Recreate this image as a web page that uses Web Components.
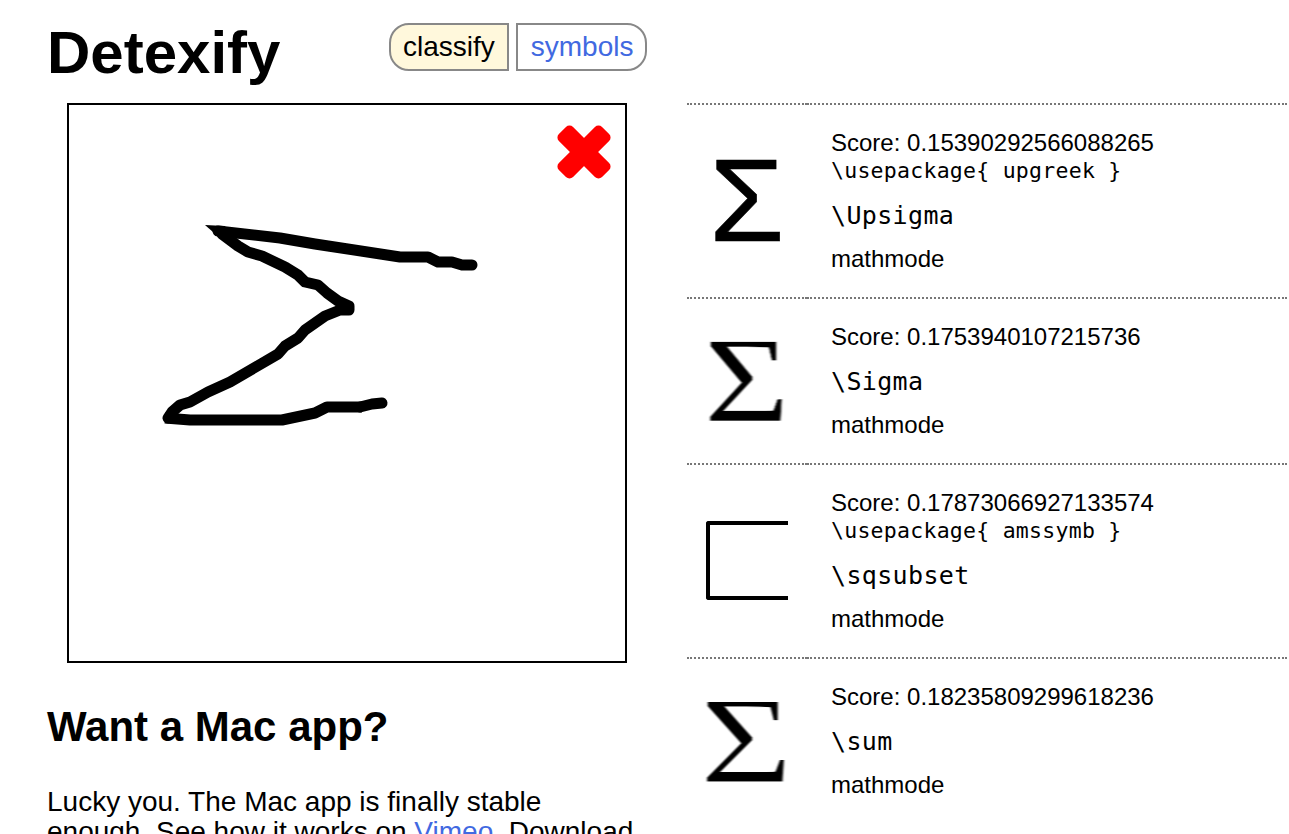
<!DOCTYPE html>
<html>

<head>
    <meta charset="utf-8">
    <meta name="viewport" content="width=device-width, initial-scale=1.0">
    <title>Detexify</title>
    <style>
        html, body {
            margin: 0;
            height: 100%;
            overflow: hidden;
            background: #fff;
        }

        body {
            font-family: "Liberation Sans", Arial, sans-serif;
            font-size: 24px;
            color: #000;
        }
    </style>
</head>

<body>
    <detexify-app>
        <detexify-header slot="header"></detexify-header>
        <draw-canvas slot="left"></draw-canvas>
        <mac-note slot="left">
            Lucky you. The Mac app is finally stable enough. See how it works on <a href="#">Vimeo</a>. Download
        </mac-note>

        <symbol-row slot="right" score="0.15390292566088265" package="upgreek" command="\Upsigma" kind="upsigma"></symbol-row>
        <symbol-row slot="right" score="0.1753940107215736" command="\Sigma" kind="sigma"></symbol-row>
        <symbol-row slot="right" score="0.17873066927133574" package="amssymb" command="\sqsubset" kind="sqsubset"></symbol-row>
        <symbol-row slot="right" score="0.18235809299618236" command="\sum" kind="sum"></symbol-row>
    </detexify-app>

    <template id="app-template">
        <style>
            :host {
                display: block;
                padding: 0 0 0 47px;
            }

            .columns {
                display: grid;
                grid-template-columns: 600px 600px;
                column-gap: 40px;
            }

            .right {
                border-bottom: 2px dotted #777;
            }
        </style>
        <slot name="header"></slot>
        <div class="columns">
            <div><slot name="left"></slot></div>
            <div class="right"><slot name="right"></slot></div>
        </div>
    </template>

    <template id="header-template">
        <style>
            :host {
                display: flex;
                align-items: flex-start;
                height: 103px;
            }

            h1 {
                margin: 18px 0 0 0;
                font-size: 60px;
                line-height: 69px;
                font-weight: bold;
                width: 342px;
            }

            nav {
                display: flex;
                gap: 7px;
                margin-top: 23px;
                font-size: 28px;
            }

            a {
                display: block;
                box-sizing: border-box;
                height: 48px;
                line-height: 44px;
                padding: 0 12px;
                border: 2px solid #888;
                color: #4169e1;
                text-decoration: none;
            }

            .classify {
                color: #000;
                background: #fff8dc;
                border-radius: 20px 0 0 20px;
            }

            .symbols {
                padding: 0 11px 0 13px;
                border-radius: 0 20px 20px 0;
            }
        </style>
        <h1>Detexify</h1>
        <nav>
            <a class="classify" href="#">classify</a>
            <a class="symbols" href="#">symbols</a>
        </nav>
    </template>

    <template id="canvas-template">
        <style>
            :host {
                display: block;
                position: relative;
                box-sizing: border-box;
                width: 560px;
                height: 560px;
                margin: 0 auto;
                border: 2px solid #000;
            }

            svg {
                display: block;
            }

            /* clear button sits on top of the drawing */
            .clear {
                position: absolute;
                top: 20px;
                right: 14px;
            }
        </style>
        <svg width="556" height="556" viewBox="69 105 556 556">
            <path fill="#000" d="M205 225 L225 226 L234 244 L222 240 Z" />
            <path fill="none" stroke="#000" stroke-width="11" stroke-linejoin="round" stroke-linecap="round"
                d="M218 231 L280 238 L315 244 L400 257 L428 257 L438 262 L452 262 L462 265 L472 265" />
            <path fill="none" stroke="#000" stroke-width="11" stroke-linejoin="round" stroke-linecap="round"
                d="M222 234 L238 246 L248 252 L262 256 L285 267 L298 275 L305 282 L318 285 L327 293 L338 301 L349 306 L349 310 L340 310 L325 316 L305 330 L298 338 L285 346 L278 354 L230 382 L208 392 L190 402 L180 405 L172 412 L168 418" />
            <path fill="none" stroke="#000" stroke-width="11" stroke-linejoin="round" stroke-linecap="butt"
                d="M165 418 L190 420 L282 420 L315 413 L327 407 L362 407" />
            <path fill="none" stroke="#000" stroke-width="11" stroke-linejoin="round" stroke-linecap="round"
                d="M360 407 L372 404 L382 403" />
        </svg>
        <svg class="clear" width="54" height="54" viewBox="0 0 54 54">
            <g fill="#f00">
                <rect x="-3.5" y="17" width="61" height="20" rx="5" transform="rotate(45 27 27)" />
                <rect x="-3.5" y="17" width="61" height="20" rx="5" transform="rotate(-45 27 27)" />
            </g>
        </svg>
    </template>

    <template id="note-template">
        <style>
            :host {
                display: block;
                font-size: 28px;
                line-height: 30px;
            }

            h2 {
                margin: 40px 0 0 0;
                font-size: 42px;
                line-height: 48px;
                font-weight: bold;
            }

            p {
                margin: 36px 0 0 0;
            }

            ::slotted(a) {
                color: #4169e1;
                text-decoration: none;
            }
        </style>
        <h2>Want a Mac app?</h2>
        <p><slot></slot></p>
    </template>

    <template id="row-template">
        <style>
            :host {
                display: grid;
                grid-template-columns: 120px 480px;
            }

            .image, .info {
                border-top: 2px dotted #777;
            }

            .image {
                display: flex;
                align-items: center;
                justify-content: center;
                overflow: hidden;
            }

            .info {
                padding: 24px 0 24px 24px;
                line-height: 28px;
            }

            code {
                display: block;
                font-family: "DejaVu Sans Mono", monospace;
            }

            .package {
                font-size: 21.5px;
                letter-spacing: 0.26px;
                line-height: 28px;
            }

            .command {
                font-size: 25px;
                letter-spacing: 0.35px;
                line-height: 30px;
                margin: 16px 0 14px;
            }

            /* the symbols are pictures on the real page, a little soft */
            .glyph {
                display: block;
                filter: blur(0.7px);
                line-height: 1;
                color: #000;
            }

            .upsigma {
                font-family: "Liberation Sans", sans-serif;
                font-size: 116px;
                transform: scale(1.05, 1);
                -webkit-text-stroke: 0.5px #000;
            }

            .sigma {
                font-family: "Liberation Serif", serif;
                font-size: 120px;
                transform: scale(1.22, 1);
                -webkit-text-stroke: 0.5px #fff;
            }

            .sum {
                font-family: "Liberation Serif", serif;
                font-size: 122px;
                transform: scale(1.3, 1);
                -webkit-text-stroke: 1px #fff;
            }

            .sqsubset {
                box-sizing: border-box;
                width: 82px;
                height: 79px;
                margin-bottom: 2px;
                border: 4px solid #000;
                border-right: 0;
                border-radius: 3px 0 0 3px;
            }
        </style>
        <div class="image"><span class="glyph"></span></div>
        <div class="info">
            <div>Score: <span class="score"></span></div>
            <code class="package"></code>
            <code class="command"></code>
            <div>mathmode</div>
        </div>
    </template>

    <script type="text/javascript">

        function shadowFromTemplate(element, id) {
            let shadowRoot = element.attachShadow({ mode: 'open' });
            shadowRoot.appendChild(document.querySelector(id).content.cloneNode(true));
            return shadowRoot;
        }

        class DetexifyApp extends HTMLElement {
            constructor() {
                super();
                shadowFromTemplate(this, '#app-template');
            }
        }
        customElements.define('detexify-app', DetexifyApp);

        class DetexifyHeader extends HTMLElement {
            constructor() {
                super();
                shadowFromTemplate(this, '#header-template');
            }
        }
        customElements.define('detexify-header', DetexifyHeader);

        class DrawCanvas extends HTMLElement {
            constructor() {
                super();
                shadowFromTemplate(this, '#canvas-template');
            }
        }
        customElements.define('draw-canvas', DrawCanvas);

        class MacNote extends HTMLElement {
            constructor() {
                super();
                shadowFromTemplate(this, '#note-template');
            }
        }
        customElements.define('mac-note', MacNote);

        // one result of the classifier
        class SymbolRow extends HTMLElement {
            connectedCallback() {
                if (this.shadowRoot) return;
                let root = shadowFromTemplate(this, '#row-template');
                root.querySelector('.score').textContent = this.getAttribute('score');
                root.querySelector('.command').textContent = this.getAttribute('command');

                let pack = this.getAttribute('package');
                let packageLine = root.querySelector('.package');
                if (pack) {
                    packageLine.textContent = '\\usepackage{ ' + pack + ' }';
                } else {
                    packageLine.remove();
                }

                let kind = this.getAttribute('kind');
                let glyph = root.querySelector('.glyph');
                glyph.classList.add(kind);
                if (kind !== 'sqsubset') glyph.textContent = 'Σ';
            }
        }
        customElements.define('symbol-row', SymbolRow);

    </script>
</body>
</html>
